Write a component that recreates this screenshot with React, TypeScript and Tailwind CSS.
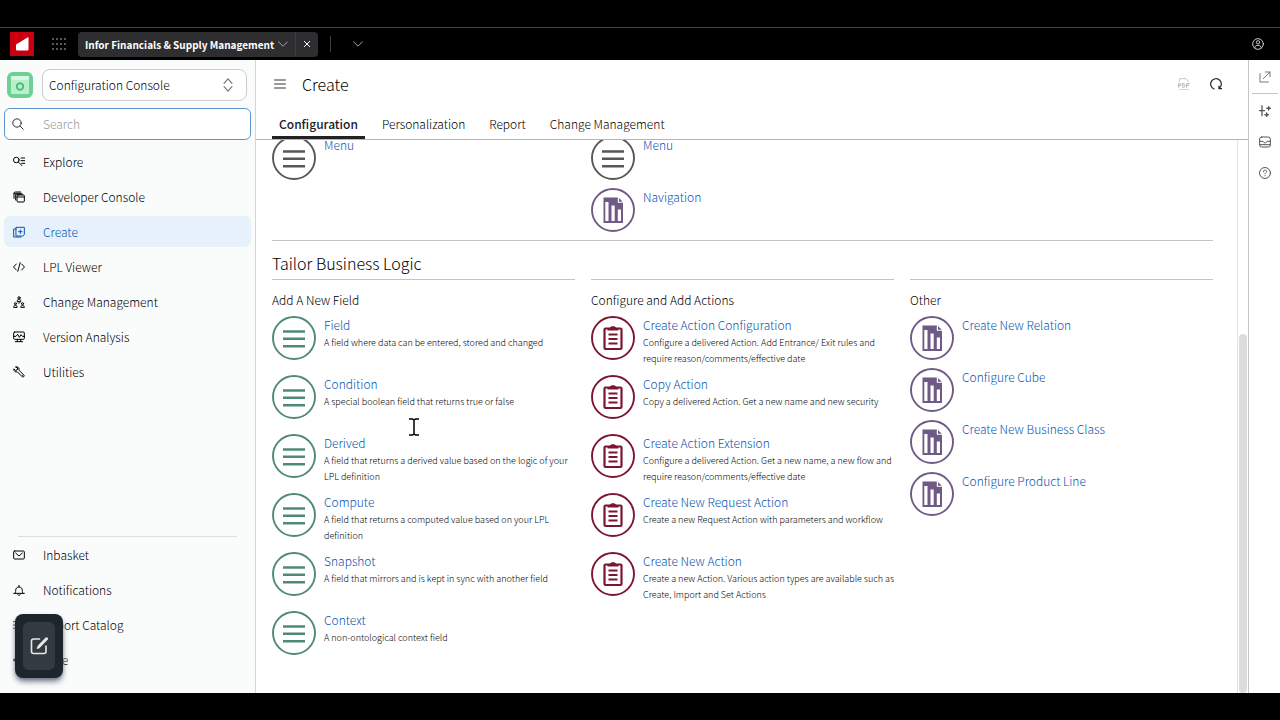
import React, { useState } from 'react';
import clsx from 'clsx';

type BadgeKind = 'lines' | 'clipboard' | 'chart';

interface Entry {
  title: string;
  description?: string;
}

interface IconProps {
  children: React.ReactNode;
  className?: string;
}

const Icon: React.FC<IconProps> = ({ children, className = 'size-3' }) => (
  <svg
    viewBox="0 0 18 18"
    className={clsx('shrink-0', className)}
    fill="none"
    stroke="currentColor"
    strokeWidth="1.5"
    strokeLinecap="round"
    strokeLinejoin="round"
    aria-hidden="true"
  >
    {children}
  </svg>
);

const mainNav = [
  {
    label: 'Explore',
    icon: (
      <>
        <circle cx="5" cy="6" r="4.2" />
        <path d="M8 9l5.500 5.500M12 3h5.500M12 7h5.500M13 11h4.500" />
      </>
    ),
  },
  {
    label: 'Developer Console',
    icon: (
      <>
        <rect x="6" y="6" width="11" height="10.5" rx="1.5" />
        <path d="M6 9h11M4 13.500V4.800h10.500M1.500 11V4.500C1.500 2 2 1.500 4 1.500h7.500M1.500 3.500h11" />
      </>
    ),
  },
  {
    label: 'Create',
    icon: (
      <>
        <path d="M5 2h12v11l-2.500 2H5zM11 5.800v5.400M8.300 8.500h5.400" />
        <path d="M5 4.500H1v12h11" />
      </>
    ),
  },
  {
    label: 'LPL Viewer',
    icon: <path d="M5 4.500.800 9 5 13.500M13 4.500 17.200 9 13 13.500M10.800 2.500 7.200 15.500" />,
  },
  {
    label: 'Change Management',
    icon: (
      <>
        <circle cx="9" cy="2.8" r="1.7" />
        <path d="M6.300 7.500c.2-2 1.300-2.600 2.700-2.600s2.500.6 2.700 2.600zM9 9v2M6 10.500l-.8.6M12 10.500l.8.6" />
        <circle cx="3.6" cy="11.5" r="1.5" />
        <path d="M1 16.500c.2-2 1.200-2.600 2.600-2.600s2.400.6 2.600 2.600z" />
        <circle cx="14.4" cy="11.5" r="1.5" />
        <path d="M11.800 16.500c.2-2 1.200-2.600 2.600-2.600s2.400.6 2.600 2.600z" />
      </>
    ),
  },
  {
    label: 'Version Analysis',
    icon: (
      <>
        <rect x="1" y="1.5" width="16" height="11" rx="1.5" />
        <path d="M1 8h3.500L7 5l2.500 4.500L12 5.500 14 8h3M6.500 12.500v3M11.500 12.500v3M3.500 16h11" />
      </>
    ),
  },
  {
    label: 'Utilities',
    icon: (
      <path d="M4.300 1.300C6.500.700 9 2 9.200 4.600L9 6.300l7.500 7.500c1 1.500-1 3.500-2.500 2.500L6.500 8.800C3.500 9.800.800 7.500 1.200 4.300l2.500 2.300 2.500-.6.600-2.500zM13.800 13.800l.4.4" />
    ),
  },
];

const footerNav = [
  {
    label: 'Inbasket',
    icon: (
      <>
        <rect x="1" y="3" width="16" height="12" rx="1.5" />
        <path d="M4 6l5 4.500L14 6" />
      </>
    ),
  },
  {
    label: 'Notifications',
    icon: <path d="M1 14h16M3 14c.8-1 1-2 1-4.500 0-3 2-5 5-5s5 2 5 5c0 2.500.2 3.500 1 4.500M9 4.500V2M7 16c.8 1.200 3.200 1.200 4 0" />,
  },
  {
    label: 'Report Catalog',
    icon: <path d="M1 4h1M1 9h1M1 14h1M5 4h12M5 9h12M5 14h12" />,
  },
  {
    label: 'Hide',
    icon: <path d="M6 4 1 9l5 5M1 9h16" />,
  },
];

const tabs = ['Configuration', 'Personalization', 'Report', 'Change Management'];

const fieldEntries: Entry[] = [
  { title: 'Field', description: 'A field where data can be entered, stored and changed' },
  { title: 'Condition', description: 'A special boolean field that returns true or false' },
  { title: 'Derived', description: 'A field that returns a derived value based on the logic of your LPL definition' },
  { title: 'Compute', description: 'A field that returns a computed value based on your LPL definition' },
  { title: 'Snapshot', description: 'A field that mirrors and is kept in sync with another field' },
  { title: 'Context', description: 'A non-ontological context field' },
];

const actionEntries: Entry[] = [
  {
    title: 'Create Action Configuration',
    description: 'Configure a delivered Action. Add Entrance/ Exit rules and require reason/comments/effective date',
  },
  { title: 'Copy Action', description: 'Copy a delivered Action. Get a new name and new security' },
  {
    title: 'Create Action Extension',
    description: 'Configure a delivered Action. Get a new name, a new flow and require reason/comments/effective date',
  },
  { title: 'Create New Request Action', description: 'Create a new Request Action with parameters and workflow' },
  {
    title: 'Create New Action',
    description: 'Create a new Action. Various action types are available such as Create, Import and Set Actions',
  },
];

const otherEntries: Entry[] = [
  { title: 'Create New Relation' },
  { title: 'Configure Cube' },
  { title: 'Create New Business Class' },
  { title: 'Configure Product Line' },
];

const Badge: React.FC<{ kind: BadgeKind; color: string }> = ({ kind, color }) => (
  <svg viewBox="0 0 44 44" className={clsx('size-11 shrink-0', color)} fill="none" stroke="currentColor" aria-hidden="true">
    <circle cx="22" cy="22" r="21" strokeWidth="1.9" />
    {kind === 'lines' && <path d="M11 15.500h22M11 22.800h22M11 30.200h22" strokeWidth="2.4" />}
    {kind === 'clipboard' && (
      <>
        <rect x="13.5" y="12.5" width="17" height="20.5" rx="1" strokeWidth="2.2" />
        <path d="M16.500 14.500v-2.300h2.300c.5-1.600 1.500-2 3.200-2s2.700.4 3.200 2h2.300v2.300z" fill="currentColor" stroke="none" />
        <path d="M17.500 18.500h9M17.500 23h9M17.500 27.500h9" strokeWidth="1.8" />
      </>
    )}
    {kind === 'chart' && (
      <>
        <path d="M12.500 9.500h14.300v5.300h5.200V35H12.500z" fill="currentColor" stroke="none" />
        <path d="M28 10v3.700h3.700z" fill="currentColor" stroke="none" />
        <path d="M14.300 14h3.200v19h-3.200zM20.500 17.500h3.200V33h-3.200zM26.800 21.500h3.200V33h-3.200z" fill="white" stroke="none" />
      </>
    )}
  </svg>
);

interface EntryListProps {
  entries: Entry[];
  kind: BadgeKind;
  color: string;
}

const EntryList: React.FC<EntryListProps> = ({ entries, kind, color }) => (
  <ul className="flex flex-col gap-2">
    {entries.map((entry) => (
      <li key={entry.title} className={clsx('flex gap-2', entry.description && 'min-h-[51px]')}>
        <Badge kind={kind} color={color} />
        <div className="min-w-0">
          <a href="#" className="block text-[12px] leading-[18px] text-[#0a55b0]">
            {entry.title}
          </a>
          {entry.description && <p className="mt-px text-[9px] leading-4 text-black">{entry.description}</p>}
        </div>
      </li>
    ))}
  </ul>
);

const Group: React.FC<EntryListProps & { heading: string }> = ({ heading, ...list }) => (
  <section className="border-t border-[#c4c4c4] pt-3">
    <h3 className="mb-2 text-[12px] leading-4 text-black">{heading}</h3>
    <EntryList {...list} />
  </section>
);

const TopBar = () => (
  <header className="flex h-[33px] shrink-0 items-center border-t border-[#444] pl-2.5 pr-4 text-[#c8c8c8]">
    <svg viewBox="0 0 24 24" className="size-6" aria-label="Infor" role="img">
      <rect width="24" height="24" fill="#c8000f" />
      <path d="M6 12.500 17.500 5.500q1-.5 1 .5v11.500q0 1-1 1H7q-1 0-1-1z" fill="white" />
    </svg>
    <button type="button" aria-label="Apps" className="ml-[18px]">
      <svg viewBox="0 0 14 14" className="size-3.5" fill="currentColor">
        {[2, 7, 12].map((y) =>
          [1, 5, 9, 13].map((x) => <circle key={`${x}-${y}`} cx={x} cy={y} r="0.8" />),
        )}
      </svg>
    </button>
    <div className="ml-3 flex h-[25px] items-center rounded-sm bg-[#2e2e30]">
      <button type="button" className="flex items-center gap-1 px-[7px] text-[10px] font-bold text-white">
        Infor Financials &amp; Supply Management
        <Icon className="size-2.5 text-[#bbb]">
          <path d="M1 5l8 8 8-8" />
        </Icon>
      </button>
      <button type="button" aria-label="Close tab" className="flex h-full items-center border-l border-[#3d3d3f] px-2 text-white">
        <Icon className="size-1.5">
          <path d="M1 1l16 16M17 1 1 17" strokeWidth="3" />
        </Icon>
      </button>
    </div>
    <span className="ml-3 h-4 w-px bg-[#3c3c3c]" />
    <button type="button" aria-label="More tabs" className="ml-[22px]">
      <Icon className="size-2.5">
        <path d="M1 5l8 8 8-8" />
      </Icon>
    </button>
    <button type="button" aria-label="Account" className="ml-auto">
      <Icon>
        <circle cx="9" cy="9" r="8" />
        <circle cx="9" cy="6.5" r="2.5" />
        <path d="M4 15c.5-3 2.500-4 5-4s4.500 1 5 4" />
      </Icon>
    </button>
  </header>
);

interface SidebarProps {
  active: string;
  onSelect: (label: string) => void;
}

const Sidebar: React.FC<SidebarProps> = ({ active, onSelect }) => {
  const renderItem = ({ label, icon }: { label: string; icon: React.ReactNode }) => (
    <li key={label}>
      <button
        type="button"
        onClick={() => onSelect(label)}
        className={clsx(
          'flex h-[31px] w-full items-center gap-[18px] rounded-md pl-[9px] text-left text-[12px]',
          active === label ? 'bg-[#e6f1fc] text-[#0a55b0]' : 'text-black',
        )}
      >
        <Icon>{icon}</Icon>
        {label}
      </button>
    </li>
  );

  return (
    <aside className="relative flex w-64 shrink-0 flex-col border-r border-[#d5d5d5] bg-[#fafbfb] px-1 pt-[9px] pb-[18px]">
      <div className="flex items-center gap-[9px] pl-[3px] pr-1">
        <svg viewBox="0 0 26 26" className="size-[26px] shrink-0" aria-hidden="true">
          <rect width="26" height="26" rx="6" fill="#6ed193" />
          <rect x="4" y="4" width="18" height="18" rx="1" fill="#b9efca" />
          <path d="M4 4h18v4H4z" fill="#d9f8e2" />
          <circle cx="13" cy="14.5" r="3.2" fill="none" stroke="#4fbd7c" strokeWidth="2" />
        </svg>
        <div className="relative flex-1">
          <select
            aria-label="Console"
            className="h-8 w-full appearance-none rounded-lg border border-[#ccc] bg-white px-1.5 text-[12px] text-black"
          >
            <option>Configuration Console</option>
          </select>
          <Icon className="pointer-events-none absolute right-3 top-[9px] size-3.5 text-[#777]">
            <path d="M4 7l5-6 5 6M4 11l5 6 5-6" />
          </Icon>
        </div>
      </div>

      <div className="mt-[7px] flex h-8 shrink-0 items-center gap-[19px] rounded-md border border-[#5b94cf] bg-white pl-[7px]">
        <Icon className="size-3 text-[#333]">
          <circle cx="7.5" cy="7.5" r="6.3" />
          <path d="M12 12l5 5" />
        </Icon>
        <input
          type="text"
          aria-label="Search"
          placeholder="Search"
          className="w-full bg-transparent text-[12px] outline-none placeholder:text-[#999]"
        />
      </div>

      <ul className="mt-1.5 flex flex-col gap-1">{mainNav.map(renderItem)}</ul>
      <div className="mt-auto">
        <div className="mx-3.5 border-t border-[#dedede] pb-0.5" />
        <ul className="flex flex-col gap-1">{footerNav.map(renderItem)}</ul>
      </div>

      {/* floating note button */}
      <button
        type="button"
        aria-label="New note"
        className="absolute bottom-[15px] left-[15px] flex h-16 w-12 items-center justify-center rounded-lg bg-[#1e262d] shadow-md shadow-gray-500"
      >
        <span className="flex h-12 w-8 items-center justify-center rounded-md bg-[#333b42] text-[#e8e8e8]">
          <Icon className="size-[18px]">
            <path d="M9.500 2H3.500Q1.500 2 1.500 4v10.500q0 2 2 2H14q2 0 2-2V9" strokeWidth="1.6" />
            <path d="M9 9.500 16.500 1.800" strokeWidth="3" />
            <path d="M7.500 11l1.500-.5" strokeWidth="1.8" />
          </Icon>
        </span>
      </button>
    </aside>
  );
};

const SideRail = () => (
  <aside className="flex w-8 shrink-0 flex-col items-center border-l border-[#c4c4c4] bg-white text-[#555]">
    <button type="button" aria-label="Open in new window" className="flex h-[34px] w-[26px] items-center justify-center border-b border-[#c4c4c4]">
      <Icon>
        <path d="M1.500 4v12.500H14M6.500 11.500l10-10M9.500 1.500h7v7" strokeWidth="1.2" />
      </Icon>
    </button>
    <div className="mt-[11px] flex flex-col gap-[19px]">
      <button type="button" aria-label="Assistant" className="block">
        <Icon>
          <path d="M4.500 1v15M.800 8.500h7.500" strokeWidth="1.9" />
          <path d="M14.500 2.500v5M12 5h5M11.500 12v5M9 14.500h5" strokeWidth="2.2" />
        </Icon>
      </button>
      <button type="button" aria-label="Inbox" className="block">
        <Icon>
          <rect x="1" y="1.5" width="16" height="15" rx="3" />
          <path d="M1 8H6c.5 3 5.500 3 6 0h5M1 13h16" />
        </Icon>
      </button>
      <button type="button" aria-label="Help" className="block">
        <Icon>
          <circle cx="9" cy="9" r="8.2" />
          <path d="M6.500 7c.2-3.200 5.100-2.800 4.900 0-.1 1.500-2.400 1.600-2.400 3.200M9 13v.2" />
        </Icon>
      </button>
    </div>
  </aside>
);

const App: React.FC = () => {
  const [activeNav, setActiveNav] = useState('Create');
  const [activeTab, setActiveTab] = useState('Configuration');

  return (
    <div className="flex h-screen flex-col overflow-hidden bg-black py-[27px] font-['Noto_Sans_CJK_SC',sans-serif] font-light">
      <TopBar />
      <div className="flex min-h-0 flex-1 bg-white">
        <Sidebar active={activeNav} onSelect={setActiveNav} />

        <main className="flex min-w-0 flex-1 flex-col">
          <div className="flex h-[49px] shrink-0 items-center pb-0.5 pl-[18px] pr-[26px] text-[#222]">
            <button type="button" aria-label="Toggle menu" className="text-[#777]">
              <Icon>
                <path d="M1 3h16M1 9h16M1 15h16" strokeWidth="2" />
              </Icon>
            </button>
            <h1 className="ml-4 text-[16px] text-black">Create</h1>
            <button type="button" aria-label="Export PDF" disabled className="ml-auto text-[#aaa]">
              <Icon>
                <path d="M2 5V1h10l4 4.500v.5M2 17.500h14" strokeWidth="1" />
                <path d="M1 14V8.500h2q1.500 0 1.500 1.500T3 11.500H1M7 8.500V14h1q2.500 0 2.500-2.700T8 8.500zM13 14V8.500h4M13 11h3" strokeWidth="1.3" />
              </Icon>
            </button>
            <button type="button" aria-label="Refresh" className="ml-5">
              <Icon>
                <path d="M6 16.500a8 8 0 1 1 7.500-.800M13.500 12v4h4" strokeWidth="1.8" />
              </Icon>
            </button>
          </div>

          <div role="tablist" className="flex h-[31px] shrink-0 border-b border-[#b5b5b5] pl-4">
            {tabs.map((tab) => (
              <button
                key={tab}
                type="button"
                role="tab"
                aria-selected={activeTab === tab}
                onClick={() => setActiveTab(tab)}
                className={clsx(
                  'mr-2.5 border-b-[3px] px-[7px] pt-0.5 text-[12px]',
                  activeTab === tab ? 'border-[#222] font-medium text-[#222]' : 'border-transparent text-black',
                )}
              >
                {tab}
              </button>
            ))}
          </div>

          <div className="flex min-h-0 flex-1">
            <div className="min-w-0 flex-1 overflow-hidden pl-4 pr-6">
              <div className="-mt-1 grid grid-cols-3 gap-x-4 border-b border-[#c4c4c4] pb-2">
                <EntryList entries={[{ title: 'Menu' }]} kind="lines" color="text-[#57575a]" />
                <div className="flex flex-col gap-2">
                  <EntryList entries={[{ title: 'Menu' }]} kind="lines" color="text-[#57575a]" />
                  <EntryList entries={[{ title: 'Navigation' }]} kind="chart" color="text-[#6f5a85]" />
                </div>
              </div>
              <h2 className="pt-2.5 pb-1 text-[16px] leading-6 text-black">Tailor Business Logic</h2>
              <div className="grid grid-cols-3 gap-x-4">
                <Group heading="Add A New Field" entries={fieldEntries} kind="lines" color="text-[#4f8a75]" />
                <Group heading="Configure and Add Actions" entries={actionEntries} kind="clipboard" color="text-[#7d1530]" />
                <Group heading="Other" entries={otherEntries} kind="chart" color="text-[#6f5a85]" />
              </div>
            </div>
            <div className="flex w-[11px] shrink-0 flex-col justify-end border-l border-[#e4e4e4] px-px">
              <div className="h-[65%] rounded-full bg-[#dcdcdc]" />
            </div>
          </div>
        </main>

        <SideRail />
      </div>

      {/* text cursor */}
      <svg viewBox="0 0 10 18" className="pointer-events-none absolute left-[409px] top-[418px] h-[18px] w-2.5" fill="none" stroke="black" strokeWidth="1.5">
        <path d="M0 1h3.500L5 2.200 6.500 1H10M5 2v14M0 17h3.500L5 15.800 6.500 17H10" />
      </svg>
    </div>
  );
};

export default App;
